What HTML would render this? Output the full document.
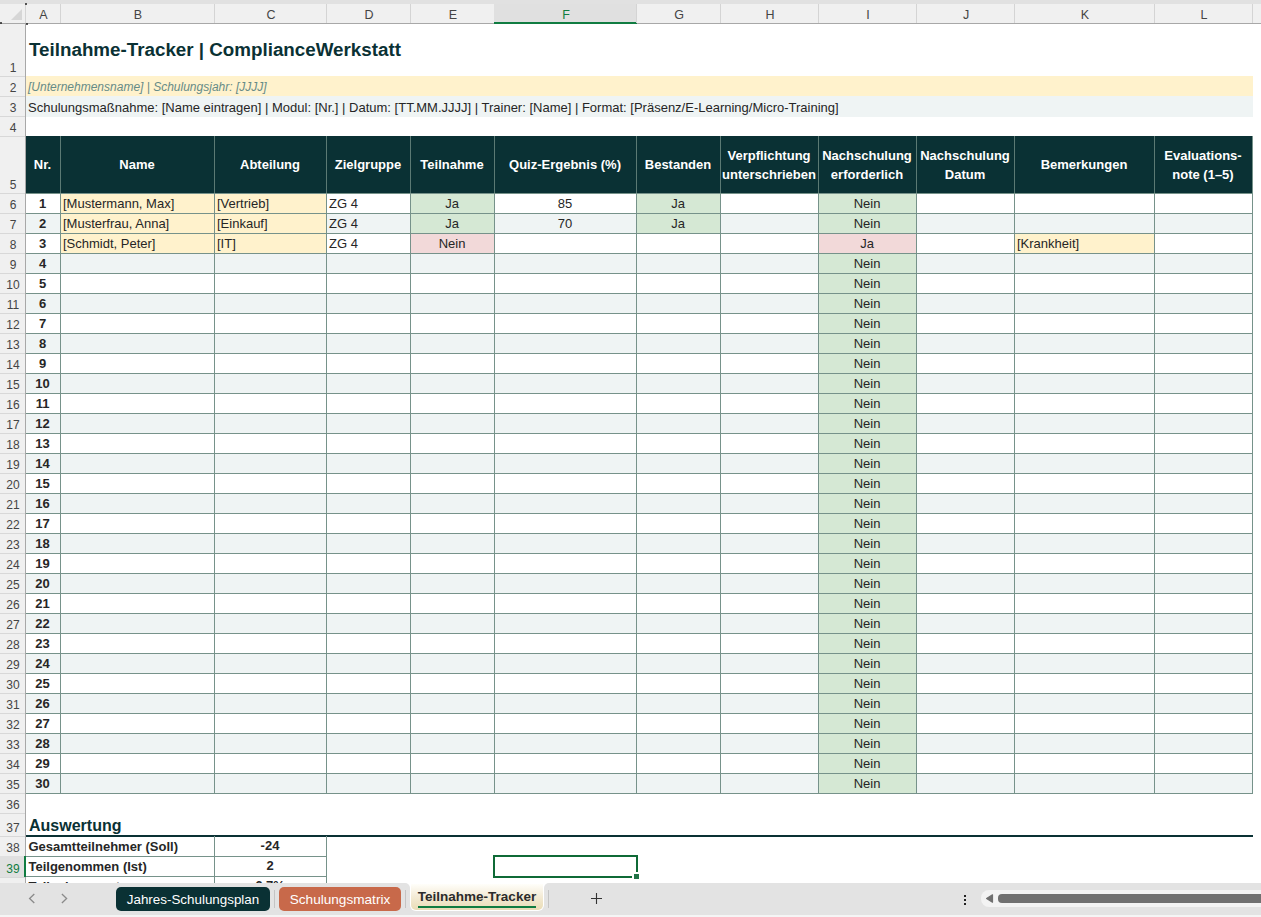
<!DOCTYPE html>
<html><head><meta charset="utf-8"><style>
html,body{margin:0;padding:0;width:1261px;height:917px;overflow:hidden;background:#fff;font-family:"Liberation Sans",sans-serif}
body>div{position:absolute;box-sizing:border-box;white-space:nowrap;overflow:visible}
</style></head><body>
<div style="left:0px;top:0px;width:1261px;height:4px;background:#e1e1e1"></div>
<div style="left:0px;top:4px;width:1261px;height:19px;background:#f0f0f0"></div>
<div style="left:0px;top:23px;width:1261px;height:1px;background:#a8a8a8"></div>
<svg style="position:absolute;left:0;top:4px" width="25" height="19"><polygon points="22,5 22,16 11,16" fill="#d6d6d6"/></svg>
<div style="left:60px;top:4px;width:1px;height:19px;background:#d4d4d4"></div>
<div style="left:26px;top:6px;width:35px;height:18px;text-align:center;line-height:19px;font-size:12.5px;color:#444">A</div>
<div style="left:214px;top:4px;width:1px;height:19px;background:#d4d4d4"></div>
<div style="left:61px;top:6px;width:154px;height:18px;text-align:center;line-height:19px;font-size:12.5px;color:#444">B</div>
<div style="left:326px;top:4px;width:1px;height:19px;background:#d4d4d4"></div>
<div style="left:215px;top:6px;width:112px;height:18px;text-align:center;line-height:19px;font-size:12.5px;color:#444">C</div>
<div style="left:410px;top:4px;width:1px;height:19px;background:#d4d4d4"></div>
<div style="left:327px;top:6px;width:84px;height:18px;text-align:center;line-height:19px;font-size:12.5px;color:#444">D</div>
<div style="left:494px;top:4px;width:1px;height:19px;background:#d4d4d4"></div>
<div style="left:411px;top:6px;width:84px;height:18px;text-align:center;line-height:19px;font-size:12.5px;color:#444">E</div>
<div style="left:494px;top:4px;width:142px;height:18px;background:#e0e0e0"></div>
<div style="left:494px;top:22px;width:143px;height:2px;background:#107c41"></div>
<div style="left:636px;top:4px;width:1px;height:19px;background:#d4d4d4"></div>
<div style="left:495px;top:6px;width:142px;height:18px;text-align:center;line-height:19px;font-size:12.5px;color:#107c41">F</div>
<div style="left:720px;top:4px;width:1px;height:19px;background:#d4d4d4"></div>
<div style="left:637px;top:6px;width:84px;height:18px;text-align:center;line-height:19px;font-size:12.5px;color:#444">G</div>
<div style="left:818px;top:4px;width:1px;height:19px;background:#d4d4d4"></div>
<div style="left:721px;top:6px;width:98px;height:18px;text-align:center;line-height:19px;font-size:12.5px;color:#444">H</div>
<div style="left:916px;top:4px;width:1px;height:19px;background:#d4d4d4"></div>
<div style="left:819px;top:6px;width:98px;height:18px;text-align:center;line-height:19px;font-size:12.5px;color:#444">I</div>
<div style="left:1014px;top:4px;width:1px;height:19px;background:#d4d4d4"></div>
<div style="left:917px;top:6px;width:98px;height:18px;text-align:center;line-height:19px;font-size:12.5px;color:#444">J</div>
<div style="left:1154px;top:4px;width:1px;height:19px;background:#d4d4d4"></div>
<div style="left:1015px;top:6px;width:140px;height:18px;text-align:center;line-height:19px;font-size:12.5px;color:#444">K</div>
<div style="left:1252px;top:4px;width:1px;height:19px;background:#d4d4d4"></div>
<div style="left:1155px;top:6px;width:98px;height:18px;text-align:center;line-height:19px;font-size:12.5px;color:#444">L</div>
<div style="left:1261px;top:4px;width:1px;height:19px;background:#d4d4d4"></div>
<div style="left:25px;top:4px;width:1px;height:19px;background:#d4d4d4"></div>
<div style="left:26px;top:24px;width:1235px;height:859px;background:#fff"></div>
<div style="left:29px;top:38px;width:600px;height:24px;font-size:18.8px;font-weight:bold;color:#0a3134;line-height:24px">Teilnahme-Tracker | ComplianceWerkstatt</div>
<div style="left:26px;top:76px;width:1227px;height:20px;background:#fff2cc"></div>
<div style="left:28px;top:77px;width:600px;height:20px;font-size:12px;font-style:italic;color:#668b87;line-height:21px">[Unternehmensname] | Schulungsjahr: [JJJJ]</div>
<div style="left:26px;top:96px;width:1227px;height:21px;background:#eff4f4"></div>
<div style="left:28px;top:96.5px;width:1000px;height:20px;font-size:13px;color:#262626;line-height:22px">Schulungsmaßnahme: [Name eintragen] | Modul: [Nr.] | Datum: [TT.MM.JJJJ] | Trainer: [Name] | Format: [Präsenz/E-Learning/Micro-Training]</div>
<div style="left:25px;top:136px;width:1228px;height:57px;background:#0a3134"></div>
<div style="left:25px;top:136px;width:35px;height:57px;display:flex;align-items:center;justify-content:center;text-align:center;font-size:13px;font-weight:bold;color:#fff;line-height:19px">Nr.</div>
<div style="left:60px;top:136px;width:154px;height:57px;display:flex;align-items:center;justify-content:center;text-align:center;font-size:13px;font-weight:bold;color:#fff;line-height:19px">Name</div>
<div style="left:214px;top:136px;width:112px;height:57px;display:flex;align-items:center;justify-content:center;text-align:center;font-size:13px;font-weight:bold;color:#fff;line-height:19px">Abteilung</div>
<div style="left:326px;top:136px;width:84px;height:57px;display:flex;align-items:center;justify-content:center;text-align:center;font-size:13px;font-weight:bold;color:#fff;line-height:19px">Zielgruppe</div>
<div style="left:410px;top:136px;width:84px;height:57px;display:flex;align-items:center;justify-content:center;text-align:center;font-size:13px;font-weight:bold;color:#fff;line-height:19px">Teilnahme</div>
<div style="left:494px;top:136px;width:142px;height:57px;display:flex;align-items:center;justify-content:center;text-align:center;font-size:13px;font-weight:bold;color:#fff;line-height:19px">Quiz-Ergebnis (%)</div>
<div style="left:636px;top:136px;width:84px;height:57px;display:flex;align-items:center;justify-content:center;text-align:center;font-size:13px;font-weight:bold;color:#fff;line-height:19px">Bestanden</div>
<div style="left:720px;top:136px;width:98px;height:57px;display:flex;align-items:center;justify-content:center;text-align:center;font-size:13px;font-weight:bold;color:#fff;line-height:19px">Verpflichtung<br>unterschrieben</div>
<div style="left:818px;top:136px;width:98px;height:57px;display:flex;align-items:center;justify-content:center;text-align:center;font-size:13px;font-weight:bold;color:#fff;line-height:19px">Nachschulung<br>erforderlich</div>
<div style="left:916px;top:136px;width:98px;height:57px;display:flex;align-items:center;justify-content:center;text-align:center;font-size:13px;font-weight:bold;color:#fff;line-height:19px">Nachschulung<br>Datum</div>
<div style="left:1014px;top:136px;width:140px;height:57px;display:flex;align-items:center;justify-content:center;text-align:center;font-size:13px;font-weight:bold;color:#fff;line-height:19px">Bemerkungen</div>
<div style="left:1154px;top:136px;width:98px;height:57px;display:flex;align-items:center;justify-content:center;text-align:center;font-size:13px;font-weight:bold;color:#fff;line-height:19px">Evaluations-<br>note (1–5)</div>
<div style="left:26px;top:193px;width:1226px;height:20px;background:#fff"></div>
<div style="left:60px;top:193px;width:154px;height:20px;background:#fff2cc"></div>
<div style="left:214px;top:193px;width:112px;height:20px;background:#fff2cc"></div>
<div style="left:410px;top:193px;width:84px;height:20px;background:#d5e8d4"></div>
<div style="left:636px;top:193px;width:84px;height:20px;background:#d5e8d4"></div>
<div style="left:818px;top:193px;width:98px;height:20px;background:#d5e8d4"></div>
<div style="left:25px;top:193px;width:35px;height:20px;text-align:center;font-size:13px;font-weight:bold;color:#262626;line-height:21px">1</div>
<div style="left:63px;top:193px;width:151px;height:20px;font-size:13px;color:#262626;line-height:21px">[Mustermann, Max]</div>
<div style="left:217px;top:193px;width:109px;height:20px;font-size:13px;color:#262626;line-height:21px">[Vertrieb]</div>
<div style="left:329px;top:193px;width:81px;height:20px;font-size:13px;color:#262626;line-height:21px">ZG 4</div>
<div style="left:410px;top:193px;width:84px;height:20px;text-align:center;font-size:13px;color:#262626;line-height:21px">Ja</div>
<div style="left:494px;top:193px;width:142px;height:20px;text-align:center;font-size:13px;color:#262626;line-height:21px">85</div>
<div style="left:636px;top:193px;width:84px;height:20px;text-align:center;font-size:13px;color:#262626;line-height:21px">Ja</div>
<div style="left:818px;top:193px;width:98px;height:20px;text-align:center;font-size:13px;color:#262626;line-height:21px">Nein</div>
<div style="left:26px;top:213px;width:1226px;height:20px;background:#eff4f4"></div>
<div style="left:60px;top:213px;width:154px;height:20px;background:#fff2cc"></div>
<div style="left:214px;top:213px;width:112px;height:20px;background:#fff2cc"></div>
<div style="left:410px;top:213px;width:84px;height:20px;background:#d5e8d4"></div>
<div style="left:636px;top:213px;width:84px;height:20px;background:#d5e8d4"></div>
<div style="left:818px;top:213px;width:98px;height:20px;background:#d5e8d4"></div>
<div style="left:25px;top:213px;width:35px;height:20px;text-align:center;font-size:13px;font-weight:bold;color:#262626;line-height:21px">2</div>
<div style="left:63px;top:213px;width:151px;height:20px;font-size:13px;color:#262626;line-height:21px">[Musterfrau, Anna]</div>
<div style="left:217px;top:213px;width:109px;height:20px;font-size:13px;color:#262626;line-height:21px">[Einkauf]</div>
<div style="left:329px;top:213px;width:81px;height:20px;font-size:13px;color:#262626;line-height:21px">ZG 4</div>
<div style="left:410px;top:213px;width:84px;height:20px;text-align:center;font-size:13px;color:#262626;line-height:21px">Ja</div>
<div style="left:494px;top:213px;width:142px;height:20px;text-align:center;font-size:13px;color:#262626;line-height:21px">70</div>
<div style="left:636px;top:213px;width:84px;height:20px;text-align:center;font-size:13px;color:#262626;line-height:21px">Ja</div>
<div style="left:818px;top:213px;width:98px;height:20px;text-align:center;font-size:13px;color:#262626;line-height:21px">Nein</div>
<div style="left:26px;top:233px;width:1226px;height:20px;background:#fff"></div>
<div style="left:60px;top:233px;width:154px;height:20px;background:#fff2cc"></div>
<div style="left:214px;top:233px;width:112px;height:20px;background:#fff2cc"></div>
<div style="left:410px;top:233px;width:84px;height:20px;background:#f2d9d9"></div>
<div style="left:818px;top:233px;width:98px;height:20px;background:#f2d9d9"></div>
<div style="left:1014px;top:233px;width:140px;height:20px;background:#fff2cc"></div>
<div style="left:25px;top:233px;width:35px;height:20px;text-align:center;font-size:13px;font-weight:bold;color:#262626;line-height:21px">3</div>
<div style="left:63px;top:233px;width:151px;height:20px;font-size:13px;color:#262626;line-height:21px">[Schmidt, Peter]</div>
<div style="left:217px;top:233px;width:109px;height:20px;font-size:13px;color:#262626;line-height:21px">[IT]</div>
<div style="left:329px;top:233px;width:81px;height:20px;font-size:13px;color:#262626;line-height:21px">ZG 4</div>
<div style="left:410px;top:233px;width:84px;height:20px;text-align:center;font-size:13px;color:#262626;line-height:21px">Nein</div>
<div style="left:818px;top:233px;width:98px;height:20px;text-align:center;font-size:13px;color:#262626;line-height:21px">Ja</div>
<div style="left:1017px;top:233px;width:137px;height:20px;font-size:13px;color:#262626;line-height:21px">[Krankheit]</div>
<div style="left:26px;top:253px;width:1226px;height:20px;background:#eff4f4"></div>
<div style="left:818px;top:253px;width:98px;height:20px;background:#d5e8d4"></div>
<div style="left:25px;top:253px;width:35px;height:20px;text-align:center;font-size:13px;font-weight:bold;color:#262626;line-height:21px">4</div>
<div style="left:818px;top:253px;width:98px;height:20px;text-align:center;font-size:13px;color:#262626;line-height:21px">Nein</div>
<div style="left:26px;top:273px;width:1226px;height:20px;background:#fff"></div>
<div style="left:818px;top:273px;width:98px;height:20px;background:#d5e8d4"></div>
<div style="left:25px;top:273px;width:35px;height:20px;text-align:center;font-size:13px;font-weight:bold;color:#262626;line-height:21px">5</div>
<div style="left:818px;top:273px;width:98px;height:20px;text-align:center;font-size:13px;color:#262626;line-height:21px">Nein</div>
<div style="left:26px;top:293px;width:1226px;height:20px;background:#eff4f4"></div>
<div style="left:818px;top:293px;width:98px;height:20px;background:#d5e8d4"></div>
<div style="left:25px;top:293px;width:35px;height:20px;text-align:center;font-size:13px;font-weight:bold;color:#262626;line-height:21px">6</div>
<div style="left:818px;top:293px;width:98px;height:20px;text-align:center;font-size:13px;color:#262626;line-height:21px">Nein</div>
<div style="left:26px;top:313px;width:1226px;height:20px;background:#fff"></div>
<div style="left:818px;top:313px;width:98px;height:20px;background:#d5e8d4"></div>
<div style="left:25px;top:313px;width:35px;height:20px;text-align:center;font-size:13px;font-weight:bold;color:#262626;line-height:21px">7</div>
<div style="left:818px;top:313px;width:98px;height:20px;text-align:center;font-size:13px;color:#262626;line-height:21px">Nein</div>
<div style="left:26px;top:333px;width:1226px;height:20px;background:#eff4f4"></div>
<div style="left:818px;top:333px;width:98px;height:20px;background:#d5e8d4"></div>
<div style="left:25px;top:333px;width:35px;height:20px;text-align:center;font-size:13px;font-weight:bold;color:#262626;line-height:21px">8</div>
<div style="left:818px;top:333px;width:98px;height:20px;text-align:center;font-size:13px;color:#262626;line-height:21px">Nein</div>
<div style="left:26px;top:353px;width:1226px;height:20px;background:#fff"></div>
<div style="left:818px;top:353px;width:98px;height:20px;background:#d5e8d4"></div>
<div style="left:25px;top:353px;width:35px;height:20px;text-align:center;font-size:13px;font-weight:bold;color:#262626;line-height:21px">9</div>
<div style="left:818px;top:353px;width:98px;height:20px;text-align:center;font-size:13px;color:#262626;line-height:21px">Nein</div>
<div style="left:26px;top:373px;width:1226px;height:20px;background:#eff4f4"></div>
<div style="left:818px;top:373px;width:98px;height:20px;background:#d5e8d4"></div>
<div style="left:25px;top:373px;width:35px;height:20px;text-align:center;font-size:13px;font-weight:bold;color:#262626;line-height:21px">10</div>
<div style="left:818px;top:373px;width:98px;height:20px;text-align:center;font-size:13px;color:#262626;line-height:21px">Nein</div>
<div style="left:26px;top:393px;width:1226px;height:20px;background:#fff"></div>
<div style="left:818px;top:393px;width:98px;height:20px;background:#d5e8d4"></div>
<div style="left:25px;top:393px;width:35px;height:20px;text-align:center;font-size:13px;font-weight:bold;color:#262626;line-height:21px">11</div>
<div style="left:818px;top:393px;width:98px;height:20px;text-align:center;font-size:13px;color:#262626;line-height:21px">Nein</div>
<div style="left:26px;top:413px;width:1226px;height:20px;background:#eff4f4"></div>
<div style="left:818px;top:413px;width:98px;height:20px;background:#d5e8d4"></div>
<div style="left:25px;top:413px;width:35px;height:20px;text-align:center;font-size:13px;font-weight:bold;color:#262626;line-height:21px">12</div>
<div style="left:818px;top:413px;width:98px;height:20px;text-align:center;font-size:13px;color:#262626;line-height:21px">Nein</div>
<div style="left:26px;top:433px;width:1226px;height:20px;background:#fff"></div>
<div style="left:818px;top:433px;width:98px;height:20px;background:#d5e8d4"></div>
<div style="left:25px;top:433px;width:35px;height:20px;text-align:center;font-size:13px;font-weight:bold;color:#262626;line-height:21px">13</div>
<div style="left:818px;top:433px;width:98px;height:20px;text-align:center;font-size:13px;color:#262626;line-height:21px">Nein</div>
<div style="left:26px;top:453px;width:1226px;height:20px;background:#eff4f4"></div>
<div style="left:818px;top:453px;width:98px;height:20px;background:#d5e8d4"></div>
<div style="left:25px;top:453px;width:35px;height:20px;text-align:center;font-size:13px;font-weight:bold;color:#262626;line-height:21px">14</div>
<div style="left:818px;top:453px;width:98px;height:20px;text-align:center;font-size:13px;color:#262626;line-height:21px">Nein</div>
<div style="left:26px;top:473px;width:1226px;height:20px;background:#fff"></div>
<div style="left:818px;top:473px;width:98px;height:20px;background:#d5e8d4"></div>
<div style="left:25px;top:473px;width:35px;height:20px;text-align:center;font-size:13px;font-weight:bold;color:#262626;line-height:21px">15</div>
<div style="left:818px;top:473px;width:98px;height:20px;text-align:center;font-size:13px;color:#262626;line-height:21px">Nein</div>
<div style="left:26px;top:493px;width:1226px;height:20px;background:#eff4f4"></div>
<div style="left:818px;top:493px;width:98px;height:20px;background:#d5e8d4"></div>
<div style="left:25px;top:493px;width:35px;height:20px;text-align:center;font-size:13px;font-weight:bold;color:#262626;line-height:21px">16</div>
<div style="left:818px;top:493px;width:98px;height:20px;text-align:center;font-size:13px;color:#262626;line-height:21px">Nein</div>
<div style="left:26px;top:513px;width:1226px;height:20px;background:#fff"></div>
<div style="left:818px;top:513px;width:98px;height:20px;background:#d5e8d4"></div>
<div style="left:25px;top:513px;width:35px;height:20px;text-align:center;font-size:13px;font-weight:bold;color:#262626;line-height:21px">17</div>
<div style="left:818px;top:513px;width:98px;height:20px;text-align:center;font-size:13px;color:#262626;line-height:21px">Nein</div>
<div style="left:26px;top:533px;width:1226px;height:20px;background:#eff4f4"></div>
<div style="left:818px;top:533px;width:98px;height:20px;background:#d5e8d4"></div>
<div style="left:25px;top:533px;width:35px;height:20px;text-align:center;font-size:13px;font-weight:bold;color:#262626;line-height:21px">18</div>
<div style="left:818px;top:533px;width:98px;height:20px;text-align:center;font-size:13px;color:#262626;line-height:21px">Nein</div>
<div style="left:26px;top:553px;width:1226px;height:20px;background:#fff"></div>
<div style="left:818px;top:553px;width:98px;height:20px;background:#d5e8d4"></div>
<div style="left:25px;top:553px;width:35px;height:20px;text-align:center;font-size:13px;font-weight:bold;color:#262626;line-height:21px">19</div>
<div style="left:818px;top:553px;width:98px;height:20px;text-align:center;font-size:13px;color:#262626;line-height:21px">Nein</div>
<div style="left:26px;top:573px;width:1226px;height:20px;background:#eff4f4"></div>
<div style="left:818px;top:573px;width:98px;height:20px;background:#d5e8d4"></div>
<div style="left:25px;top:573px;width:35px;height:20px;text-align:center;font-size:13px;font-weight:bold;color:#262626;line-height:21px">20</div>
<div style="left:818px;top:573px;width:98px;height:20px;text-align:center;font-size:13px;color:#262626;line-height:21px">Nein</div>
<div style="left:26px;top:593px;width:1226px;height:20px;background:#fff"></div>
<div style="left:818px;top:593px;width:98px;height:20px;background:#d5e8d4"></div>
<div style="left:25px;top:593px;width:35px;height:20px;text-align:center;font-size:13px;font-weight:bold;color:#262626;line-height:21px">21</div>
<div style="left:818px;top:593px;width:98px;height:20px;text-align:center;font-size:13px;color:#262626;line-height:21px">Nein</div>
<div style="left:26px;top:613px;width:1226px;height:20px;background:#eff4f4"></div>
<div style="left:818px;top:613px;width:98px;height:20px;background:#d5e8d4"></div>
<div style="left:25px;top:613px;width:35px;height:20px;text-align:center;font-size:13px;font-weight:bold;color:#262626;line-height:21px">22</div>
<div style="left:818px;top:613px;width:98px;height:20px;text-align:center;font-size:13px;color:#262626;line-height:21px">Nein</div>
<div style="left:26px;top:633px;width:1226px;height:20px;background:#fff"></div>
<div style="left:818px;top:633px;width:98px;height:20px;background:#d5e8d4"></div>
<div style="left:25px;top:633px;width:35px;height:20px;text-align:center;font-size:13px;font-weight:bold;color:#262626;line-height:21px">23</div>
<div style="left:818px;top:633px;width:98px;height:20px;text-align:center;font-size:13px;color:#262626;line-height:21px">Nein</div>
<div style="left:26px;top:653px;width:1226px;height:20px;background:#eff4f4"></div>
<div style="left:818px;top:653px;width:98px;height:20px;background:#d5e8d4"></div>
<div style="left:25px;top:653px;width:35px;height:20px;text-align:center;font-size:13px;font-weight:bold;color:#262626;line-height:21px">24</div>
<div style="left:818px;top:653px;width:98px;height:20px;text-align:center;font-size:13px;color:#262626;line-height:21px">Nein</div>
<div style="left:26px;top:673px;width:1226px;height:20px;background:#fff"></div>
<div style="left:818px;top:673px;width:98px;height:20px;background:#d5e8d4"></div>
<div style="left:25px;top:673px;width:35px;height:20px;text-align:center;font-size:13px;font-weight:bold;color:#262626;line-height:21px">25</div>
<div style="left:818px;top:673px;width:98px;height:20px;text-align:center;font-size:13px;color:#262626;line-height:21px">Nein</div>
<div style="left:26px;top:693px;width:1226px;height:20px;background:#eff4f4"></div>
<div style="left:818px;top:693px;width:98px;height:20px;background:#d5e8d4"></div>
<div style="left:25px;top:693px;width:35px;height:20px;text-align:center;font-size:13px;font-weight:bold;color:#262626;line-height:21px">26</div>
<div style="left:818px;top:693px;width:98px;height:20px;text-align:center;font-size:13px;color:#262626;line-height:21px">Nein</div>
<div style="left:26px;top:713px;width:1226px;height:20px;background:#fff"></div>
<div style="left:818px;top:713px;width:98px;height:20px;background:#d5e8d4"></div>
<div style="left:25px;top:713px;width:35px;height:20px;text-align:center;font-size:13px;font-weight:bold;color:#262626;line-height:21px">27</div>
<div style="left:818px;top:713px;width:98px;height:20px;text-align:center;font-size:13px;color:#262626;line-height:21px">Nein</div>
<div style="left:26px;top:733px;width:1226px;height:20px;background:#eff4f4"></div>
<div style="left:818px;top:733px;width:98px;height:20px;background:#d5e8d4"></div>
<div style="left:25px;top:733px;width:35px;height:20px;text-align:center;font-size:13px;font-weight:bold;color:#262626;line-height:21px">28</div>
<div style="left:818px;top:733px;width:98px;height:20px;text-align:center;font-size:13px;color:#262626;line-height:21px">Nein</div>
<div style="left:26px;top:753px;width:1226px;height:20px;background:#fff"></div>
<div style="left:818px;top:753px;width:98px;height:20px;background:#d5e8d4"></div>
<div style="left:25px;top:753px;width:35px;height:20px;text-align:center;font-size:13px;font-weight:bold;color:#262626;line-height:21px">29</div>
<div style="left:818px;top:753px;width:98px;height:20px;text-align:center;font-size:13px;color:#262626;line-height:21px">Nein</div>
<div style="left:26px;top:773px;width:1226px;height:20px;background:#eff4f4"></div>
<div style="left:818px;top:773px;width:98px;height:20px;background:#d5e8d4"></div>
<div style="left:25px;top:773px;width:35px;height:20px;text-align:center;font-size:13px;font-weight:bold;color:#262626;line-height:21px">30</div>
<div style="left:818px;top:773px;width:98px;height:20px;text-align:center;font-size:13px;color:#262626;line-height:21px">Nein</div>
<div style="left:25px;top:193px;width:1px;height:600px;background:#76928a"></div>
<div style="left:60px;top:193px;width:1px;height:600px;background:#76928a"></div>
<div style="left:214px;top:193px;width:1px;height:600px;background:#76928a"></div>
<div style="left:326px;top:193px;width:1px;height:600px;background:#76928a"></div>
<div style="left:410px;top:193px;width:1px;height:600px;background:#76928a"></div>
<div style="left:494px;top:193px;width:1px;height:600px;background:#76928a"></div>
<div style="left:636px;top:193px;width:1px;height:600px;background:#76928a"></div>
<div style="left:720px;top:193px;width:1px;height:600px;background:#76928a"></div>
<div style="left:818px;top:193px;width:1px;height:600px;background:#76928a"></div>
<div style="left:916px;top:193px;width:1px;height:600px;background:#76928a"></div>
<div style="left:1014px;top:193px;width:1px;height:600px;background:#76928a"></div>
<div style="left:1154px;top:193px;width:1px;height:600px;background:#76928a"></div>
<div style="left:1252px;top:193px;width:1px;height:600px;background:#76928a"></div>
<div style="left:60px;top:136px;width:1px;height:57px;background:#5b7a74"></div>
<div style="left:214px;top:136px;width:1px;height:57px;background:#5b7a74"></div>
<div style="left:326px;top:136px;width:1px;height:57px;background:#5b7a74"></div>
<div style="left:410px;top:136px;width:1px;height:57px;background:#5b7a74"></div>
<div style="left:494px;top:136px;width:1px;height:57px;background:#5b7a74"></div>
<div style="left:636px;top:136px;width:1px;height:57px;background:#5b7a74"></div>
<div style="left:720px;top:136px;width:1px;height:57px;background:#5b7a74"></div>
<div style="left:818px;top:136px;width:1px;height:57px;background:#5b7a74"></div>
<div style="left:916px;top:136px;width:1px;height:57px;background:#5b7a74"></div>
<div style="left:1014px;top:136px;width:1px;height:57px;background:#5b7a74"></div>
<div style="left:1154px;top:136px;width:1px;height:57px;background:#5b7a74"></div>
<div style="left:25px;top:136px;width:1px;height:657px;background:#76928a"></div>
<div style="left:1252px;top:136px;width:1px;height:657px;background:#76928a"></div>
<div style="left:25px;top:193px;width:1228px;height:1px;background:#76928a"></div>
<div style="left:25px;top:213px;width:1228px;height:1px;background:#76928a"></div>
<div style="left:25px;top:233px;width:1228px;height:1px;background:#76928a"></div>
<div style="left:25px;top:253px;width:1228px;height:1px;background:#76928a"></div>
<div style="left:25px;top:273px;width:1228px;height:1px;background:#76928a"></div>
<div style="left:25px;top:293px;width:1228px;height:1px;background:#76928a"></div>
<div style="left:25px;top:313px;width:1228px;height:1px;background:#76928a"></div>
<div style="left:25px;top:333px;width:1228px;height:1px;background:#76928a"></div>
<div style="left:25px;top:353px;width:1228px;height:1px;background:#76928a"></div>
<div style="left:25px;top:373px;width:1228px;height:1px;background:#76928a"></div>
<div style="left:25px;top:393px;width:1228px;height:1px;background:#76928a"></div>
<div style="left:25px;top:413px;width:1228px;height:1px;background:#76928a"></div>
<div style="left:25px;top:433px;width:1228px;height:1px;background:#76928a"></div>
<div style="left:25px;top:453px;width:1228px;height:1px;background:#76928a"></div>
<div style="left:25px;top:473px;width:1228px;height:1px;background:#76928a"></div>
<div style="left:25px;top:493px;width:1228px;height:1px;background:#76928a"></div>
<div style="left:25px;top:513px;width:1228px;height:1px;background:#76928a"></div>
<div style="left:25px;top:533px;width:1228px;height:1px;background:#76928a"></div>
<div style="left:25px;top:553px;width:1228px;height:1px;background:#76928a"></div>
<div style="left:25px;top:573px;width:1228px;height:1px;background:#76928a"></div>
<div style="left:25px;top:593px;width:1228px;height:1px;background:#76928a"></div>
<div style="left:25px;top:613px;width:1228px;height:1px;background:#76928a"></div>
<div style="left:25px;top:633px;width:1228px;height:1px;background:#76928a"></div>
<div style="left:25px;top:653px;width:1228px;height:1px;background:#76928a"></div>
<div style="left:25px;top:673px;width:1228px;height:1px;background:#76928a"></div>
<div style="left:25px;top:693px;width:1228px;height:1px;background:#76928a"></div>
<div style="left:25px;top:713px;width:1228px;height:1px;background:#76928a"></div>
<div style="left:25px;top:733px;width:1228px;height:1px;background:#76928a"></div>
<div style="left:25px;top:753px;width:1228px;height:1px;background:#76928a"></div>
<div style="left:25px;top:773px;width:1228px;height:1px;background:#76928a"></div>
<div style="left:25px;top:793px;width:1228px;height:1px;background:#76928a"></div>
<div style="left:29px;top:814px;width:300px;height:22px;font-size:16px;font-weight:bold;color:#0a3134;line-height:24px">Auswertung</div>
<div style="left:26px;top:835px;width:1227px;height:2px;background:#0a3134"></div>
<div style="left:28.5px;top:836px;width:185px;height:20px;font-size:13px;font-weight:bold;color:#262626;line-height:21px">Gesamtteilnehmer (Soll)</div>
<div style="left:214px;top:836px;width:112px;height:20px;text-align:center;font-size:13px;font-weight:bold;color:#262626;line-height:20px">-24</div>
<div style="left:28.5px;top:856px;width:185px;height:20px;font-size:13px;font-weight:bold;color:#262626;line-height:21px">Teilgenommen (Ist)</div>
<div style="left:214px;top:856px;width:112px;height:20px;text-align:center;font-size:13px;font-weight:bold;color:#262626;line-height:20px">2</div>
<div style="left:28.5px;top:875.5px;width:185px;height:20px;font-size:13px;font-weight:bold;color:#262626;line-height:21px">Teilnahmequote</div>
<div style="left:214px;top:875.5px;width:112px;height:20px;text-align:center;font-size:13px;font-weight:bold;color:#262626;line-height:20px">6,7%</div>
<div style="left:25px;top:856px;width:301px;height:1px;background:#76928a"></div>
<div style="left:25px;top:876px;width:301px;height:1px;background:#76928a"></div>
<div style="left:214px;top:836px;width:1px;height:60px;background:#76928a"></div>
<div style="left:326px;top:836px;width:1px;height:60px;background:#76928a"></div>
<div style="left:0px;top:24px;width:25px;height:859px;background:#f0f0f0"></div>
<div style="left:25px;top:23px;width:1px;height:860px;background:#a8a8a8"></div>
<div style="left:0px;top:76px;width:25px;height:1px;background:#d8d8d8"></div>
<div style="left:0.5px;top:59px;width:25px;height:18px;text-align:center;line-height:19px;font-size:12px;color:#444">1</div>
<div style="left:0px;top:96px;width:25px;height:1px;background:#d8d8d8"></div>
<div style="left:0.5px;top:79px;width:25px;height:18px;text-align:center;line-height:19px;font-size:12px;color:#444">2</div>
<div style="left:0px;top:116px;width:25px;height:1px;background:#d8d8d8"></div>
<div style="left:0.5px;top:99px;width:25px;height:18px;text-align:center;line-height:19px;font-size:12px;color:#444">3</div>
<div style="left:0px;top:136px;width:25px;height:1px;background:#d8d8d8"></div>
<div style="left:0.5px;top:119px;width:25px;height:18px;text-align:center;line-height:19px;font-size:12px;color:#444">4</div>
<div style="left:0px;top:193px;width:25px;height:1px;background:#d8d8d8"></div>
<div style="left:0.5px;top:176px;width:25px;height:18px;text-align:center;line-height:19px;font-size:12px;color:#444">5</div>
<div style="left:0px;top:213px;width:25px;height:1px;background:#d8d8d8"></div>
<div style="left:0.5px;top:196px;width:25px;height:18px;text-align:center;line-height:19px;font-size:12px;color:#444">6</div>
<div style="left:0px;top:233px;width:25px;height:1px;background:#d8d8d8"></div>
<div style="left:0.5px;top:216px;width:25px;height:18px;text-align:center;line-height:19px;font-size:12px;color:#444">7</div>
<div style="left:0px;top:253px;width:25px;height:1px;background:#d8d8d8"></div>
<div style="left:0.5px;top:236px;width:25px;height:18px;text-align:center;line-height:19px;font-size:12px;color:#444">8</div>
<div style="left:0px;top:273px;width:25px;height:1px;background:#d8d8d8"></div>
<div style="left:0.5px;top:256px;width:25px;height:18px;text-align:center;line-height:19px;font-size:12px;color:#444">9</div>
<div style="left:0px;top:293px;width:25px;height:1px;background:#d8d8d8"></div>
<div style="left:0.5px;top:276px;width:25px;height:18px;text-align:center;line-height:19px;font-size:12px;color:#444">10</div>
<div style="left:0px;top:313px;width:25px;height:1px;background:#d8d8d8"></div>
<div style="left:0.5px;top:296px;width:25px;height:18px;text-align:center;line-height:19px;font-size:12px;color:#444">11</div>
<div style="left:0px;top:333px;width:25px;height:1px;background:#d8d8d8"></div>
<div style="left:0.5px;top:316px;width:25px;height:18px;text-align:center;line-height:19px;font-size:12px;color:#444">12</div>
<div style="left:0px;top:353px;width:25px;height:1px;background:#d8d8d8"></div>
<div style="left:0.5px;top:336px;width:25px;height:18px;text-align:center;line-height:19px;font-size:12px;color:#444">13</div>
<div style="left:0px;top:373px;width:25px;height:1px;background:#d8d8d8"></div>
<div style="left:0.5px;top:356px;width:25px;height:18px;text-align:center;line-height:19px;font-size:12px;color:#444">14</div>
<div style="left:0px;top:393px;width:25px;height:1px;background:#d8d8d8"></div>
<div style="left:0.5px;top:376px;width:25px;height:18px;text-align:center;line-height:19px;font-size:12px;color:#444">15</div>
<div style="left:0px;top:413px;width:25px;height:1px;background:#d8d8d8"></div>
<div style="left:0.5px;top:396px;width:25px;height:18px;text-align:center;line-height:19px;font-size:12px;color:#444">16</div>
<div style="left:0px;top:433px;width:25px;height:1px;background:#d8d8d8"></div>
<div style="left:0.5px;top:416px;width:25px;height:18px;text-align:center;line-height:19px;font-size:12px;color:#444">17</div>
<div style="left:0px;top:453px;width:25px;height:1px;background:#d8d8d8"></div>
<div style="left:0.5px;top:436px;width:25px;height:18px;text-align:center;line-height:19px;font-size:12px;color:#444">18</div>
<div style="left:0px;top:473px;width:25px;height:1px;background:#d8d8d8"></div>
<div style="left:0.5px;top:456px;width:25px;height:18px;text-align:center;line-height:19px;font-size:12px;color:#444">19</div>
<div style="left:0px;top:493px;width:25px;height:1px;background:#d8d8d8"></div>
<div style="left:0.5px;top:476px;width:25px;height:18px;text-align:center;line-height:19px;font-size:12px;color:#444">20</div>
<div style="left:0px;top:513px;width:25px;height:1px;background:#d8d8d8"></div>
<div style="left:0.5px;top:496px;width:25px;height:18px;text-align:center;line-height:19px;font-size:12px;color:#444">21</div>
<div style="left:0px;top:533px;width:25px;height:1px;background:#d8d8d8"></div>
<div style="left:0.5px;top:516px;width:25px;height:18px;text-align:center;line-height:19px;font-size:12px;color:#444">22</div>
<div style="left:0px;top:553px;width:25px;height:1px;background:#d8d8d8"></div>
<div style="left:0.5px;top:536px;width:25px;height:18px;text-align:center;line-height:19px;font-size:12px;color:#444">23</div>
<div style="left:0px;top:573px;width:25px;height:1px;background:#d8d8d8"></div>
<div style="left:0.5px;top:556px;width:25px;height:18px;text-align:center;line-height:19px;font-size:12px;color:#444">24</div>
<div style="left:0px;top:593px;width:25px;height:1px;background:#d8d8d8"></div>
<div style="left:0.5px;top:576px;width:25px;height:18px;text-align:center;line-height:19px;font-size:12px;color:#444">25</div>
<div style="left:0px;top:613px;width:25px;height:1px;background:#d8d8d8"></div>
<div style="left:0.5px;top:596px;width:25px;height:18px;text-align:center;line-height:19px;font-size:12px;color:#444">26</div>
<div style="left:0px;top:633px;width:25px;height:1px;background:#d8d8d8"></div>
<div style="left:0.5px;top:616px;width:25px;height:18px;text-align:center;line-height:19px;font-size:12px;color:#444">27</div>
<div style="left:0px;top:653px;width:25px;height:1px;background:#d8d8d8"></div>
<div style="left:0.5px;top:636px;width:25px;height:18px;text-align:center;line-height:19px;font-size:12px;color:#444">28</div>
<div style="left:0px;top:673px;width:25px;height:1px;background:#d8d8d8"></div>
<div style="left:0.5px;top:656px;width:25px;height:18px;text-align:center;line-height:19px;font-size:12px;color:#444">29</div>
<div style="left:0px;top:693px;width:25px;height:1px;background:#d8d8d8"></div>
<div style="left:0.5px;top:676px;width:25px;height:18px;text-align:center;line-height:19px;font-size:12px;color:#444">30</div>
<div style="left:0px;top:713px;width:25px;height:1px;background:#d8d8d8"></div>
<div style="left:0.5px;top:696px;width:25px;height:18px;text-align:center;line-height:19px;font-size:12px;color:#444">31</div>
<div style="left:0px;top:733px;width:25px;height:1px;background:#d8d8d8"></div>
<div style="left:0.5px;top:716px;width:25px;height:18px;text-align:center;line-height:19px;font-size:12px;color:#444">32</div>
<div style="left:0px;top:753px;width:25px;height:1px;background:#d8d8d8"></div>
<div style="left:0.5px;top:736px;width:25px;height:18px;text-align:center;line-height:19px;font-size:12px;color:#444">33</div>
<div style="left:0px;top:773px;width:25px;height:1px;background:#d8d8d8"></div>
<div style="left:0.5px;top:756px;width:25px;height:18px;text-align:center;line-height:19px;font-size:12px;color:#444">34</div>
<div style="left:0px;top:793px;width:25px;height:1px;background:#d8d8d8"></div>
<div style="left:0.5px;top:776px;width:25px;height:18px;text-align:center;line-height:19px;font-size:12px;color:#444">35</div>
<div style="left:0px;top:813px;width:25px;height:1px;background:#d8d8d8"></div>
<div style="left:0.5px;top:796px;width:25px;height:18px;text-align:center;line-height:19px;font-size:12px;color:#444">36</div>
<div style="left:0px;top:836px;width:25px;height:1px;background:#d8d8d8"></div>
<div style="left:0.5px;top:819px;width:25px;height:18px;text-align:center;line-height:19px;font-size:12px;color:#444">37</div>
<div style="left:0px;top:856px;width:25px;height:1px;background:#d8d8d8"></div>
<div style="left:0.5px;top:839px;width:25px;height:18px;text-align:center;line-height:19px;font-size:12px;color:#444">38</div>
<div style="left:0px;top:856px;width:25px;height:21px;background:#e0e0e0"></div>
<div style="left:24px;top:856px;width:2px;height:21px;background:#107c41"></div>
<div style="left:0px;top:877px;width:25px;height:1px;background:#d8d8d8"></div>
<div style="left:0.5px;top:860px;width:25px;height:18px;text-align:center;line-height:19px;font-size:12px;color:#107c41">39</div>
<div style="left:0px;top:897px;width:25px;height:1px;background:#d8d8d8"></div>
<div style="left:0.5px;top:880px;width:25px;height:18px;text-align:center;line-height:19px;font-size:12px;color:#444">40</div>
<div style="left:25px;top:3px;width:2px;height:2px;background:#222;border-radius:1px"></div>
<div style="left:0px;top:22px;width:2px;height:2px;background:#222;border-radius:1px"></div>
<div style="left:26px;top:23px;width:2px;height:2px;background:#222;border-radius:1px"></div>
<div style="left:493px;top:855px;width:145px;height:23px;border:2px solid #0f6a36;box-sizing:border-box"></div>
<div style="left:632px;top:872px;width:8px;height:8px;background:#fff"></div>
<div style="left:634px;top:874px;width:5px;height:5px;background:#217346"></div>
<div style="left:0px;top:883px;width:410px;height:32px;background:#e3e3e3;border-top-right-radius:5px"></div>
<div style="left:544px;top:883px;width:717px;height:32px;background:#e3e3e3;border-top-left-radius:5px"></div>
<div style="left:400px;top:900px;width:150px;height:15px;background:#e3e3e3"></div>
<div style="left:0px;top:915px;width:1261px;height:2px;background:#f5f5f5"></div>
<svg style="position:absolute;left:26px;top:890px" width="50" height="18"><polyline points="8.3,4 3.6,8.5 8.3,13" fill="none" stroke="#8a8a8a" stroke-width="1.3"/><polyline points="35.9,4 40.6,8.5 35.9,13" fill="none" stroke="#8a8a8a" stroke-width="1.3"/></svg>
<div style="left:116px;top:887px;width:154px;height:24px;background:#0a3134;border-radius:5px;color:#fff;font-size:13.4px;text-align:center;line-height:25px">Jahres-Schulungsplan</div>
<div style="left:274px;top:890px;width:1px;height:18px;background:#c4c4c4"></div>
<div style="left:279px;top:887px;width:122px;height:24px;background:#c8694a;border-radius:5px;color:#fff;font-size:13.6px;text-align:center;line-height:25px">Schulungsmatrix</div>
<div style="left:405px;top:890px;width:1px;height:18px;background:#c4c4c4"></div>
<div style="left:410px;top:880px;width:134px;height:31px;background:#fff;border-radius:0 0 6px 6px"></div>
<div style="left:411px;top:884px;width:132px;height:26px;background:linear-gradient(#fffefa 0%,#f3ead4 50%,#e9dcb6 100%);border-radius:0 0 5px 5px"></div>
<div style="left:410px;top:883px;width:134px;height:26px;color:#2b2b2b;font-size:13.5px;font-weight:bold;text-align:center;line-height:27px">Teilnahme-Tracker</div>
<div style="left:418px;top:906px;width:118px;height:2px;background:#107c41"></div>
<div style="left:548px;top:890px;width:1px;height:18px;background:#c4c4c4"></div>
<svg style="position:absolute;left:590px;top:892px" width="14" height="14"><path d="M6.5 1V12M1 6.5H12" stroke="#333" stroke-width="1.1" fill="none"/></svg>
<div style="left:964px;top:895px;width:2px;height:2px;background:#222"></div>
<div style="left:964px;top:899px;width:2px;height:2px;background:#222"></div>
<div style="left:964px;top:903px;width:2px;height:2px;background:#222"></div>
<div style="left:981px;top:890px;width:300px;height:17px;background:#f3f3f3;border-radius:8px"></div>
<svg style="position:absolute;left:984px;top:893px" width="12" height="12"><polygon points="8.5,1.8 8.5,9.2 2.6,5.5" fill="#707070" stroke="#707070" stroke-width="1.2" stroke-linejoin="round"/></svg>
<div style="left:998px;top:894px;width:300px;height:9px;background:#707070;border-radius:4px"></div>
</body></html>
